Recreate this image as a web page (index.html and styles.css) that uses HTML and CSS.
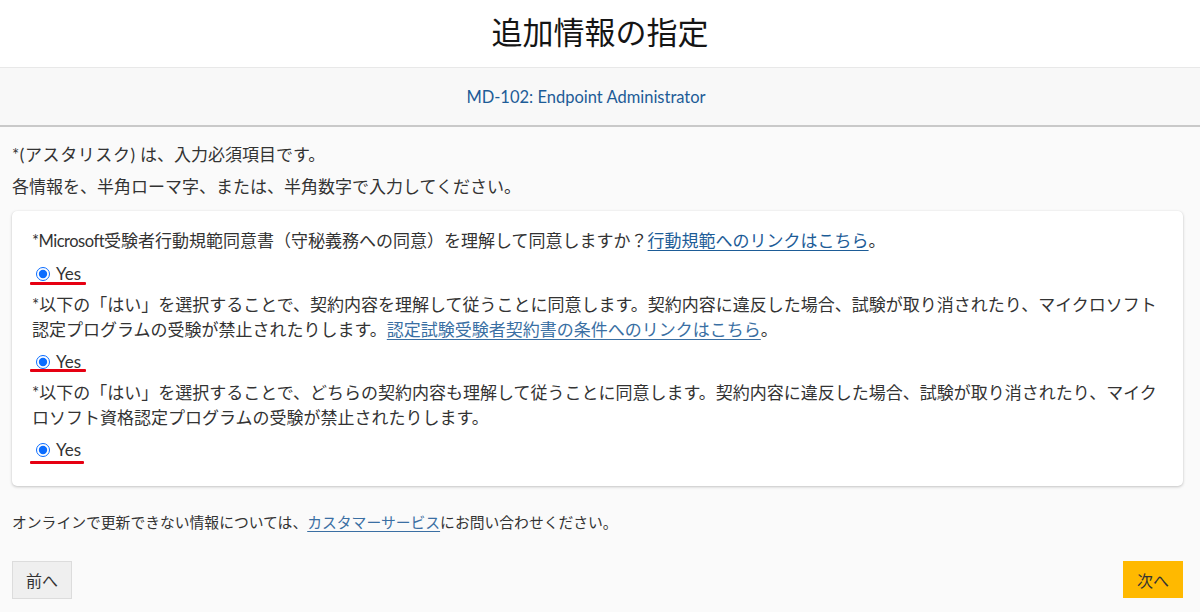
FILE: index.html
```html
<!DOCTYPE html>
<html lang="ja">
<head>
<meta charset="utf-8">
<title>追加情報の指定</title>
<link rel="stylesheet" href="styles.css">
</head>
<body>
<header class="title-bar">
  <h1 class="title">追加情報の指定</h1>
</header>
<div class="exam-bar">
  <span class="exam-name">MD-102: Endpoint Administrator</span>
</div>
<main class="content">
  <p class="note first"><span class="paren">*(アスタリスク)</span> は、入力必須項目です。</p>
  <p class="note">各情報を、半角ローマ字、または、半角数字で入力してください。</p>

  <section class="card">
    <p class="question"><span class="latin">*Microsoft</span>受験者行動規範同意書（守秘義務への同意）を理解して同意しますか？<a href="#" class="link">行動規範へのリンクはこちら</a>。</p>
    <div class="answer">
      <label class="choice mark-a"><input type="radio" class="radio" name="q1" checked><span class="yes">Yes</span></label>
    </div>
    <p class="question">*以下の「はい」を選択することで、契約内容を理解して従うことに同意します。契約内容に違反した場合、試験が取り消されたり、マイクロソフト認定プログラムの受験が禁止されたりします。<a href="#" class="link visited">認定試験受験者契約書の条件へのリンクはこちら</a>。</p>
    <div class="answer">
      <label class="choice mark-b"><input type="radio" class="radio" name="q2" checked><span class="yes">Yes</span></label>
    </div>
    <p class="question">*以下の「はい」を選択することで、どちらの契約内容も理解して従うことに同意します。契約内容に違反した場合、試験が取り消されたり、マイクロソフト資格認定プログラムの受験が禁止されたりします。</p>
    <div class="answer last">
      <label class="choice mark-c"><input type="radio" class="radio" name="q3" checked><span class="yes">Yes</span></label>
    </div>
  </section>

  <p class="contact">オンラインで更新できない情報については、<a href="#" class="link visited">カスタマーサービス</a>にお問い合わせください。</p>

  <div class="actions">
    <button class="btn btn-prev" type="button">前へ</button>
    <button class="btn btn-next" type="button">次へ</button>
  </div>
</main>
</body>
</html>
```

FILE: styles.css
```css
* { box-sizing: border-box; }

html, body {
  margin: 0;
  padding: 0;
  background: #fafafa;
}

body {
  font-family: "Lato", "Noto Sans CJK JP", sans-serif;
  color: #333;
  font-size: 17px;
}

.title-bar {
  background: #fff;
  height: 67px;
  display: flex;
  align-items: center;
  justify-content: center;
  padding-bottom: 5px;
}

.title {
  margin: 0;
  font-family: "Noto Sans CJK JP", sans-serif;
  font-weight: 400;
  font-size: 31px;
  line-height: 40px;
  color: #151515;
}

.exam-bar {
  height: 60px;
  background: #f8f8f8;
  border-top: 1px solid #e8e8e8;
  border-bottom: 2px solid #c9c9c9;
  display: flex;
  align-items: center;
  justify-content: center;
  padding-right: 28px;
}

.exam-name {
  font-size: 16.5px;
  color: #1d5c97;
  line-height: 22px;
}

.content {
  padding: 0 17px 0 12px;
}

.note {
  margin: 0;
  line-height: 25px;
  font-size: 17px;
}
.note.first { margin-top: 15px; }
.note + .note { margin-top: 7px; }

.paren { letter-spacing: 0.6px; }

.card {
  margin-top: 12px;
  background: #fff;
  border-radius: 5px;
  box-shadow: 0 1px 3px rgba(0,0,0,0.22), 0 0 1px rgba(0,0,0,0.08);
  padding: 17px 20px 18px 20px;
}

.question {
  margin: 0;
  line-height: 25px;
  font-size: 17px;
}

.latin {
  font-size: 16.5px;
  letter-spacing: -0.5px;
}

.link {
  color: #1d5c97;
  text-decoration: underline;
  text-underline-offset: 3px;
}
.link.visited { color: #3a6fa3; }

.answer {
  margin: 7px 0 6px;
  height: 25px;
  display: flex;
  align-items: center;
}

.choice {
  position: relative;
  display: flex;
  align-items: center;
  height: 25px;
  padding-left: 4px;
}

.radio {
  margin: 0 6px 0 0;
  width: 14px;
  height: 14px;
  accent-color: #0a6cff;
}

.yes {
  font-size: 17px;
  line-height: 25px;
  color: #333;
}

.choice::after {
  content: "";
  position: absolute;
  left: -2px;
  height: 3px;
  background: #e60012;
  border-radius: 1px;
}
.mark-a::after { top: 21px; width: 56px; }
.mark-b::after { top: 20px; width: 56px; }
.mark-c::after { top: 24px; width: 54px; }

.contact {
  margin: 25px 0 0;
  font-size: 14.8px;
  line-height: 22px;
}

.actions {
  margin-top: 28px;
  display: flex;
  justify-content: space-between;
  align-items: flex-start;
}

.btn {
  font-family: "Noto Sans CJK JP", sans-serif;
  font-size: 16px;
  color: #333;
  width: 60px;
  height: 38px;
  padding: 0;
  border-radius: 0;
  cursor: pointer;
}

.btn-prev {
  background: #efefef;
  border: 1px solid #dcdcdc;
}

.btn-next {
  background: #ffb900;
  border: 1px solid #ffb900;
  height: 37px;
}
```
